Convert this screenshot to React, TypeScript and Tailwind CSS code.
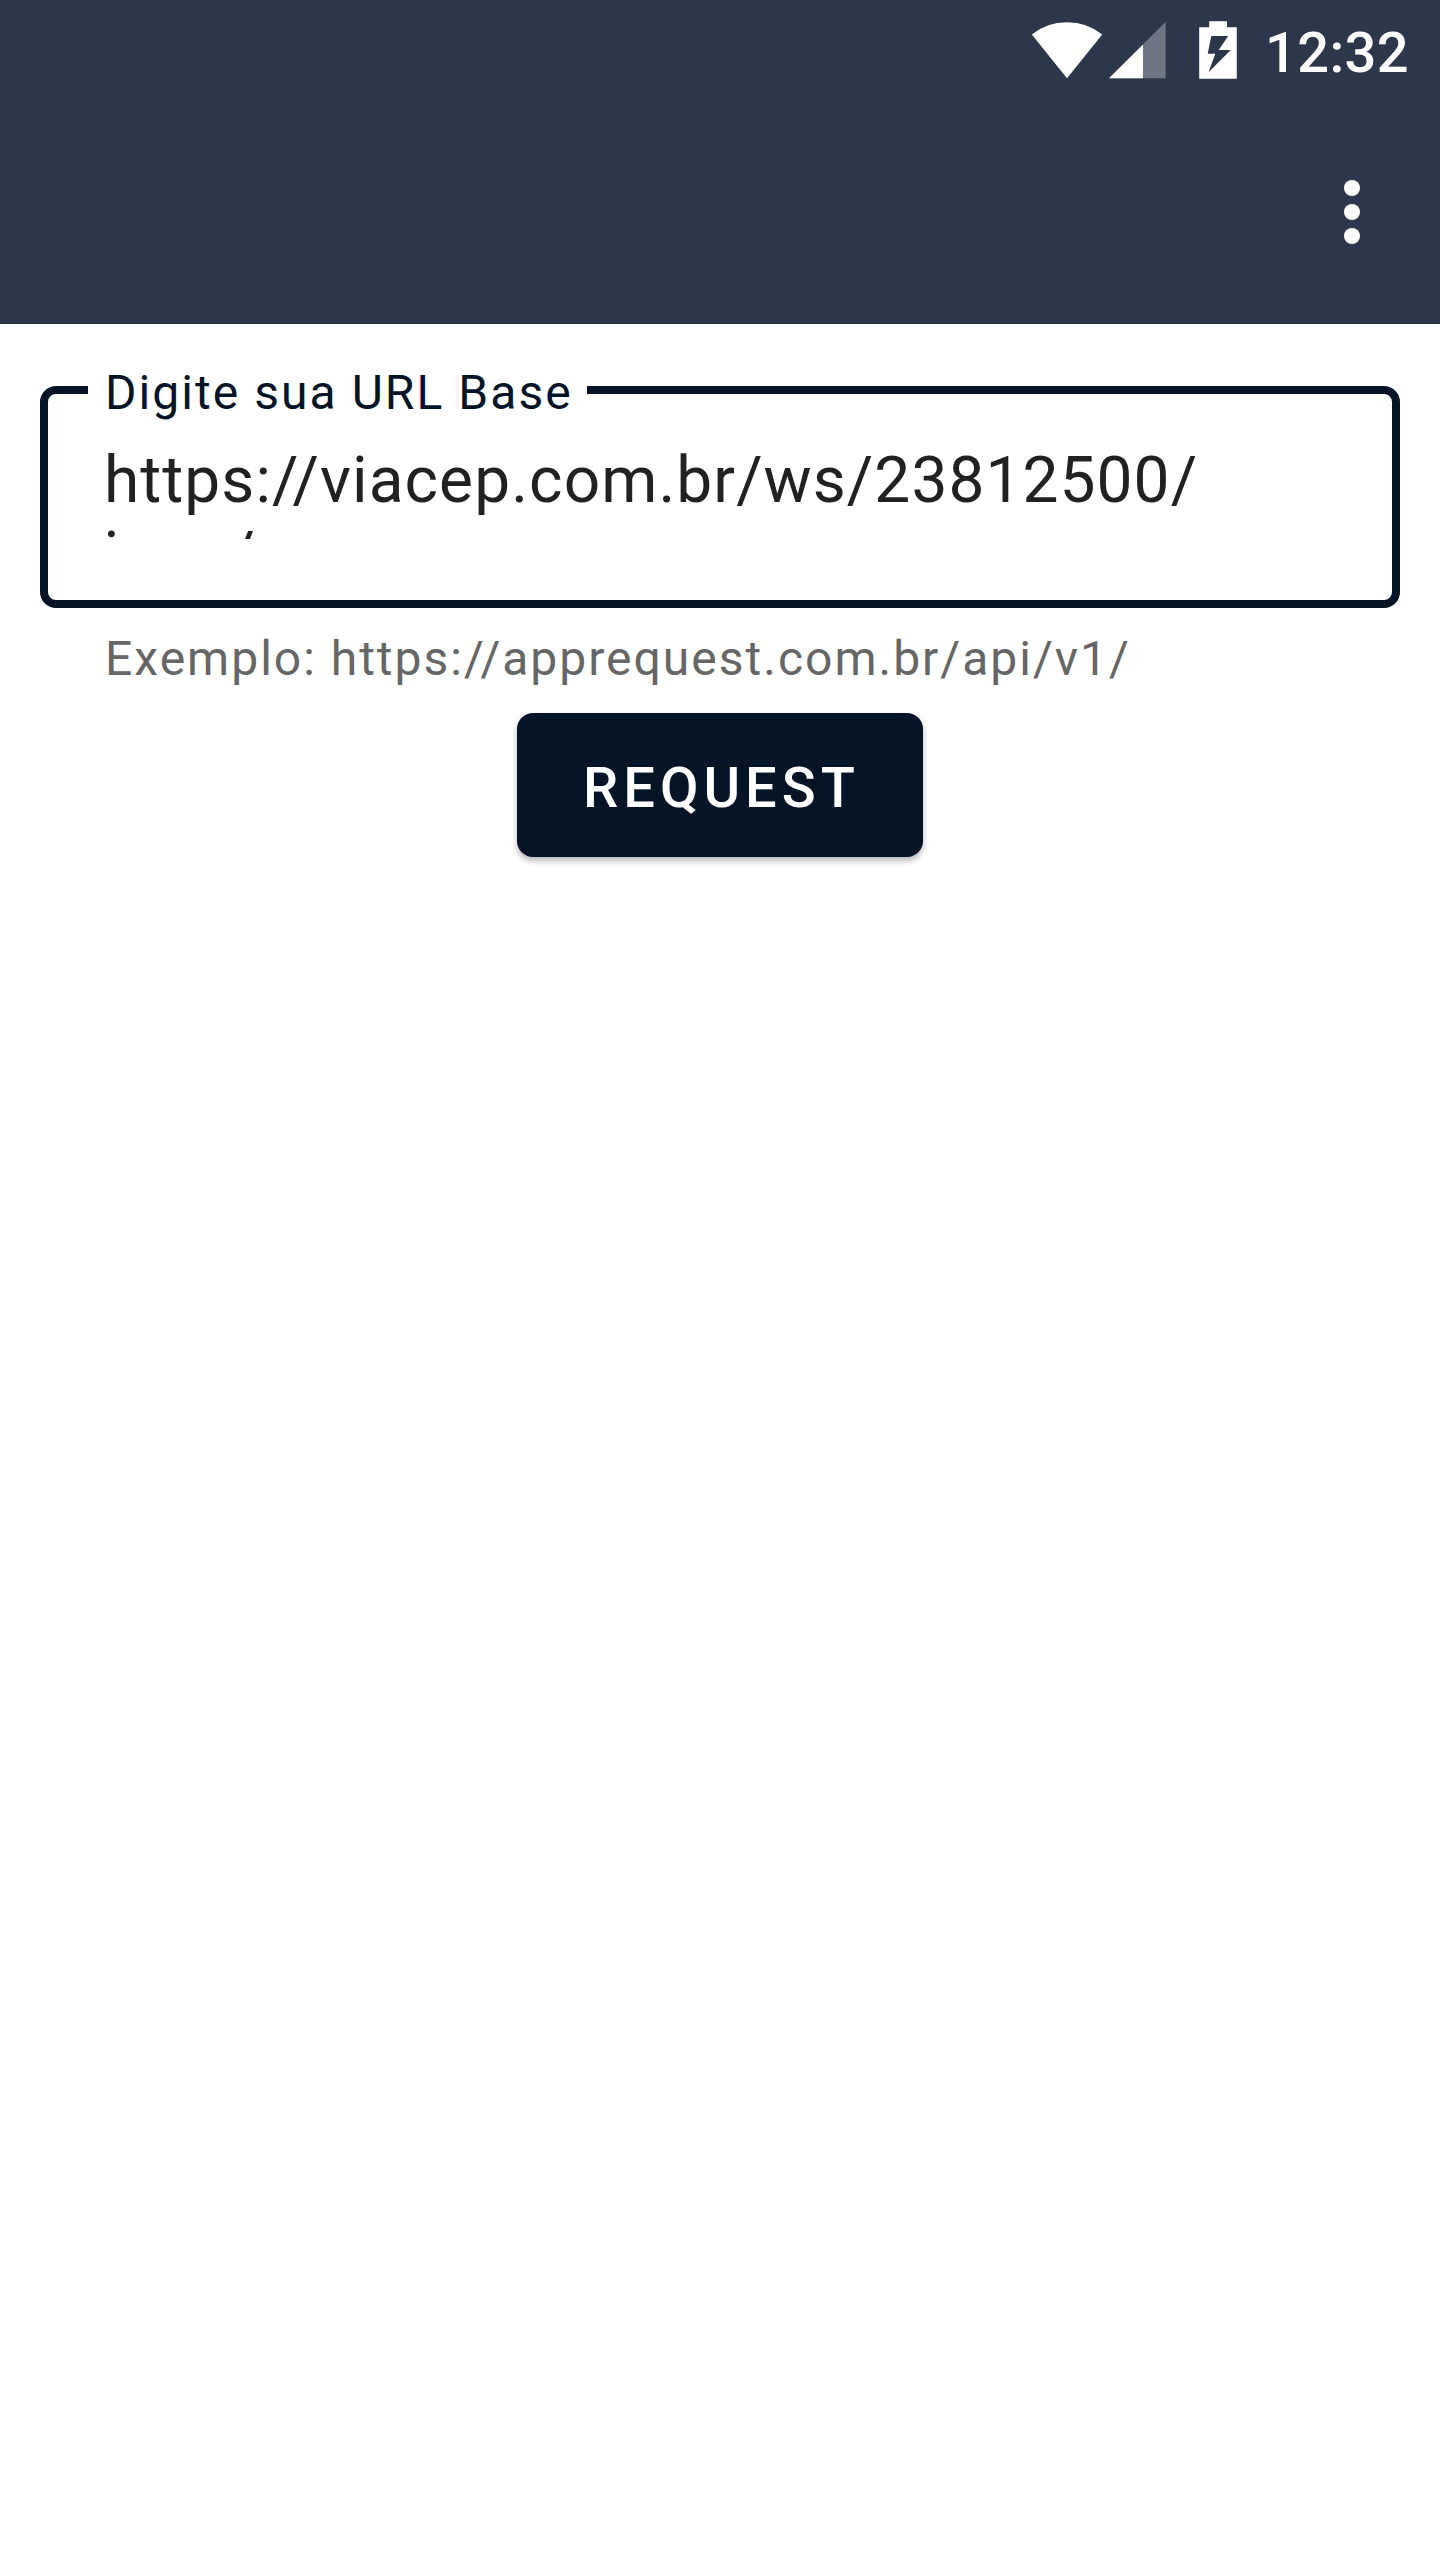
function WifiIcon() {
  return (
    <svg className="h-[58px] w-[72px]" viewBox="0 0 72 58" fill="#fff">
      <path d="M36 57.3 0.8 13.6Q15.5 1.3 36 1.3T71.2 13.6Z" />
    </svg>
  );
}

function SignalIcon() {
  return (
    <svg className="ml-[6px] h-[58px] w-[58px]" viewBox="0 0 58 58">
      <path d="M0 57.3 56.6 0.9V57.3Z" fill="#fff" fillOpacity="0.32" />
      <path d="M0 57.3 34 23.4V57.3Z" fill="#fff" />
    </svg>
  );
}

function BatteryIcon() {
  return (
    <svg className="ml-[32px] h-[58px] w-[38px]" viewBox="0 0 38 58">
      <path
        fill="#fff"
        fillRule="evenodd"
        d="M10.2 0.2H28V6.2H37.8V57.8H0.2V6.2H10.2ZM12.3 15 8.7 32.7H16.3L9.5 51.2 31.8 29H19.7L29.2 15Z"
      />
    </svg>
  );
}

function StatusBar() {
  return (
    <div className="flex h-24 items-start justify-end pr-8 pt-[21px]">
      <WifiIcon />
      <SignalIcon />
      <BatteryIcon />
      <span className="-mt-px ml-[28px] w-[143px] text-[56px] leading-[66px] font-medium tracking-[0.4px] text-white">12:32</span>
    </div>
  );
}

function ActionBar() {
  return (
    <div className="flex h-[228px] items-start justify-end pr-20 pt-[84px]">
      <button aria-label="Menu" className="flex w-4 flex-col gap-2">
        <span className="size-4 rounded-full bg-white" />
        <span className="size-4 rounded-full bg-white" />
        <span className="size-4 rounded-full bg-white" />
      </button>
    </div>
  );
}

function UrlField() {
  return (
    <div>
      <div className="relative h-[222px] rounded-2xl border-8 border-[#021426] px-14 pt-[49px]">
        <label className="absolute -top-[29px] left-10 h-14 w-[499px] bg-white pl-[17px] text-[48px] leading-[56px] tracking-[2.05px] whitespace-nowrap text-[#021426]">
          Digite sua URL Base
        </label>
        <div className="h-24 overflow-hidden text-[64px] leading-[75px] tracking-[1.07px] text-[#212121]">
          https://viacep.com.br/ws/23812500/
          <br />
          json/
        </div>
      </div>
      <p className="mt-[23px] pl-[65px] text-[48px] leading-[56px] tracking-[2px] whitespace-nowrap text-[#666]">
        Exemplo: https://apprequest.com.br/api/v1/
      </p>
    </div>
  );
}

export default function App() {
  return (
    <div className="h-[2560px] w-[1440px] overflow-hidden bg-white font-['Roboto',sans-serif]">
      <header className="bg-[#2d374b]">
        <StatusBar />
        <ActionBar />
      </header>
      <main className="flex flex-col px-10 pt-[62px]">
        <UrlField />
        <button className="mt-[26px] flex h-36 w-[406px] self-center rounded-2xl bg-[#021426] pl-[66px] pt-[42px] text-[56px] leading-[66px] font-medium tracking-[5px] text-white shadow-[0_4px_6px_rgba(0,0,0,0.28)]">
          REQUEST
        </button>
      </main>
    </div>
  );
}
